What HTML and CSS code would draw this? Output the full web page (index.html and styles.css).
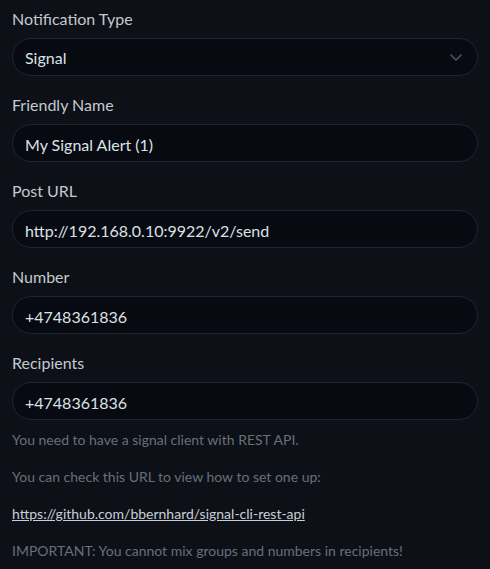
FILE: index.html
```html
<!DOCTYPE html>
<html lang="en">
<head>
<meta charset="utf-8">
<link rel="stylesheet" href="styles.css">
</head>
<body>
<form class="form">
  <div class="field">
    <label class="label" for="type">Notification Type</label>
    <div class="select-wrap">
      <select id="type" class="input select">
        <option>Signal</option>
      </select>
      <svg class="chevron" width="12" height="7" viewBox="0 0 12 7"><path d="M1 1l5 5 5-5" fill="none" stroke="#4b5462" stroke-width="1.6" stroke-linecap="round" stroke-linejoin="round"/></svg>
    </div>
  </div>
  <div class="field">
    <label class="label" for="name">Friendly Name</label>
    <input id="name" class="input" type="text" value="My Signal Alert (1)">
  </div>
  <div class="field">
    <label class="label" for="url">Post URL</label>
    <input id="url" class="input" type="text" value="http://192.168.0.10:9922/v2/send">
  </div>
  <div class="field">
    <label class="label" for="number">Number</label>
    <input id="number" class="input" type="text" value="+4748361836">
  </div>
  <div class="field">
    <label class="label" for="recipients">Recipients</label>
    <input id="recipients" class="input" type="text" value="+4748361836">
    <div class="help">
      <p>You need to have a signal client with REST API.</p>
      <p>You can check this URL to view how to set one up:</p>
      <p><a class="link" href="#">https://github.com/bbernhard/signal-cli-rest-api</a></p>
      <p>IMPORTANT: You cannot mix groups and numbers in recipients!</p>
    </div>
  </div>
</form>
</body>
</html>
```
FILE: styles.css
```css
html, body {
  margin: 0;
  background: #0d1117;
}
body {
  font-family: "Lato", "Noto Sans", sans-serif;
  font-size: 16px;
  line-height: 1.5;
  color: #c9ced6;
  padding: 6px 12px 0;
}
.form {
  display: flex;
  flex-direction: column;
  gap: 16px;
}
.field {
  display: flex;
  flex-direction: column;
}
.label {
  padding-top: 1px;
  margin-bottom: 7px;
  color: #c4c8cf;
}
.select-wrap {
  position: relative;
}
.input {
  box-sizing: border-box;
  width: 100%;
  height: 38px;
  padding: 7px 12px 5px;
  font: inherit;
  color: #dce1e8;
  background: #070a10;
  border: 1px solid #1d2532;
  border-radius: 19px;
  outline: none;
}
.select {
  appearance: none;
  -webkit-appearance: none;
}
.chevron {
  position: absolute;
  right: 16px;
  top: 16px;
  pointer-events: none;
}
.help {
  margin-top: 9px;
  font-size: 14px;
  line-height: 21px;
  color: #676f7b;
  display: flex;
  flex-direction: column;
  gap: 16px;
}
.help p {
  margin: 0;
}
.link {
  color: #c8ced8;
  text-decoration: underline;
}
```
